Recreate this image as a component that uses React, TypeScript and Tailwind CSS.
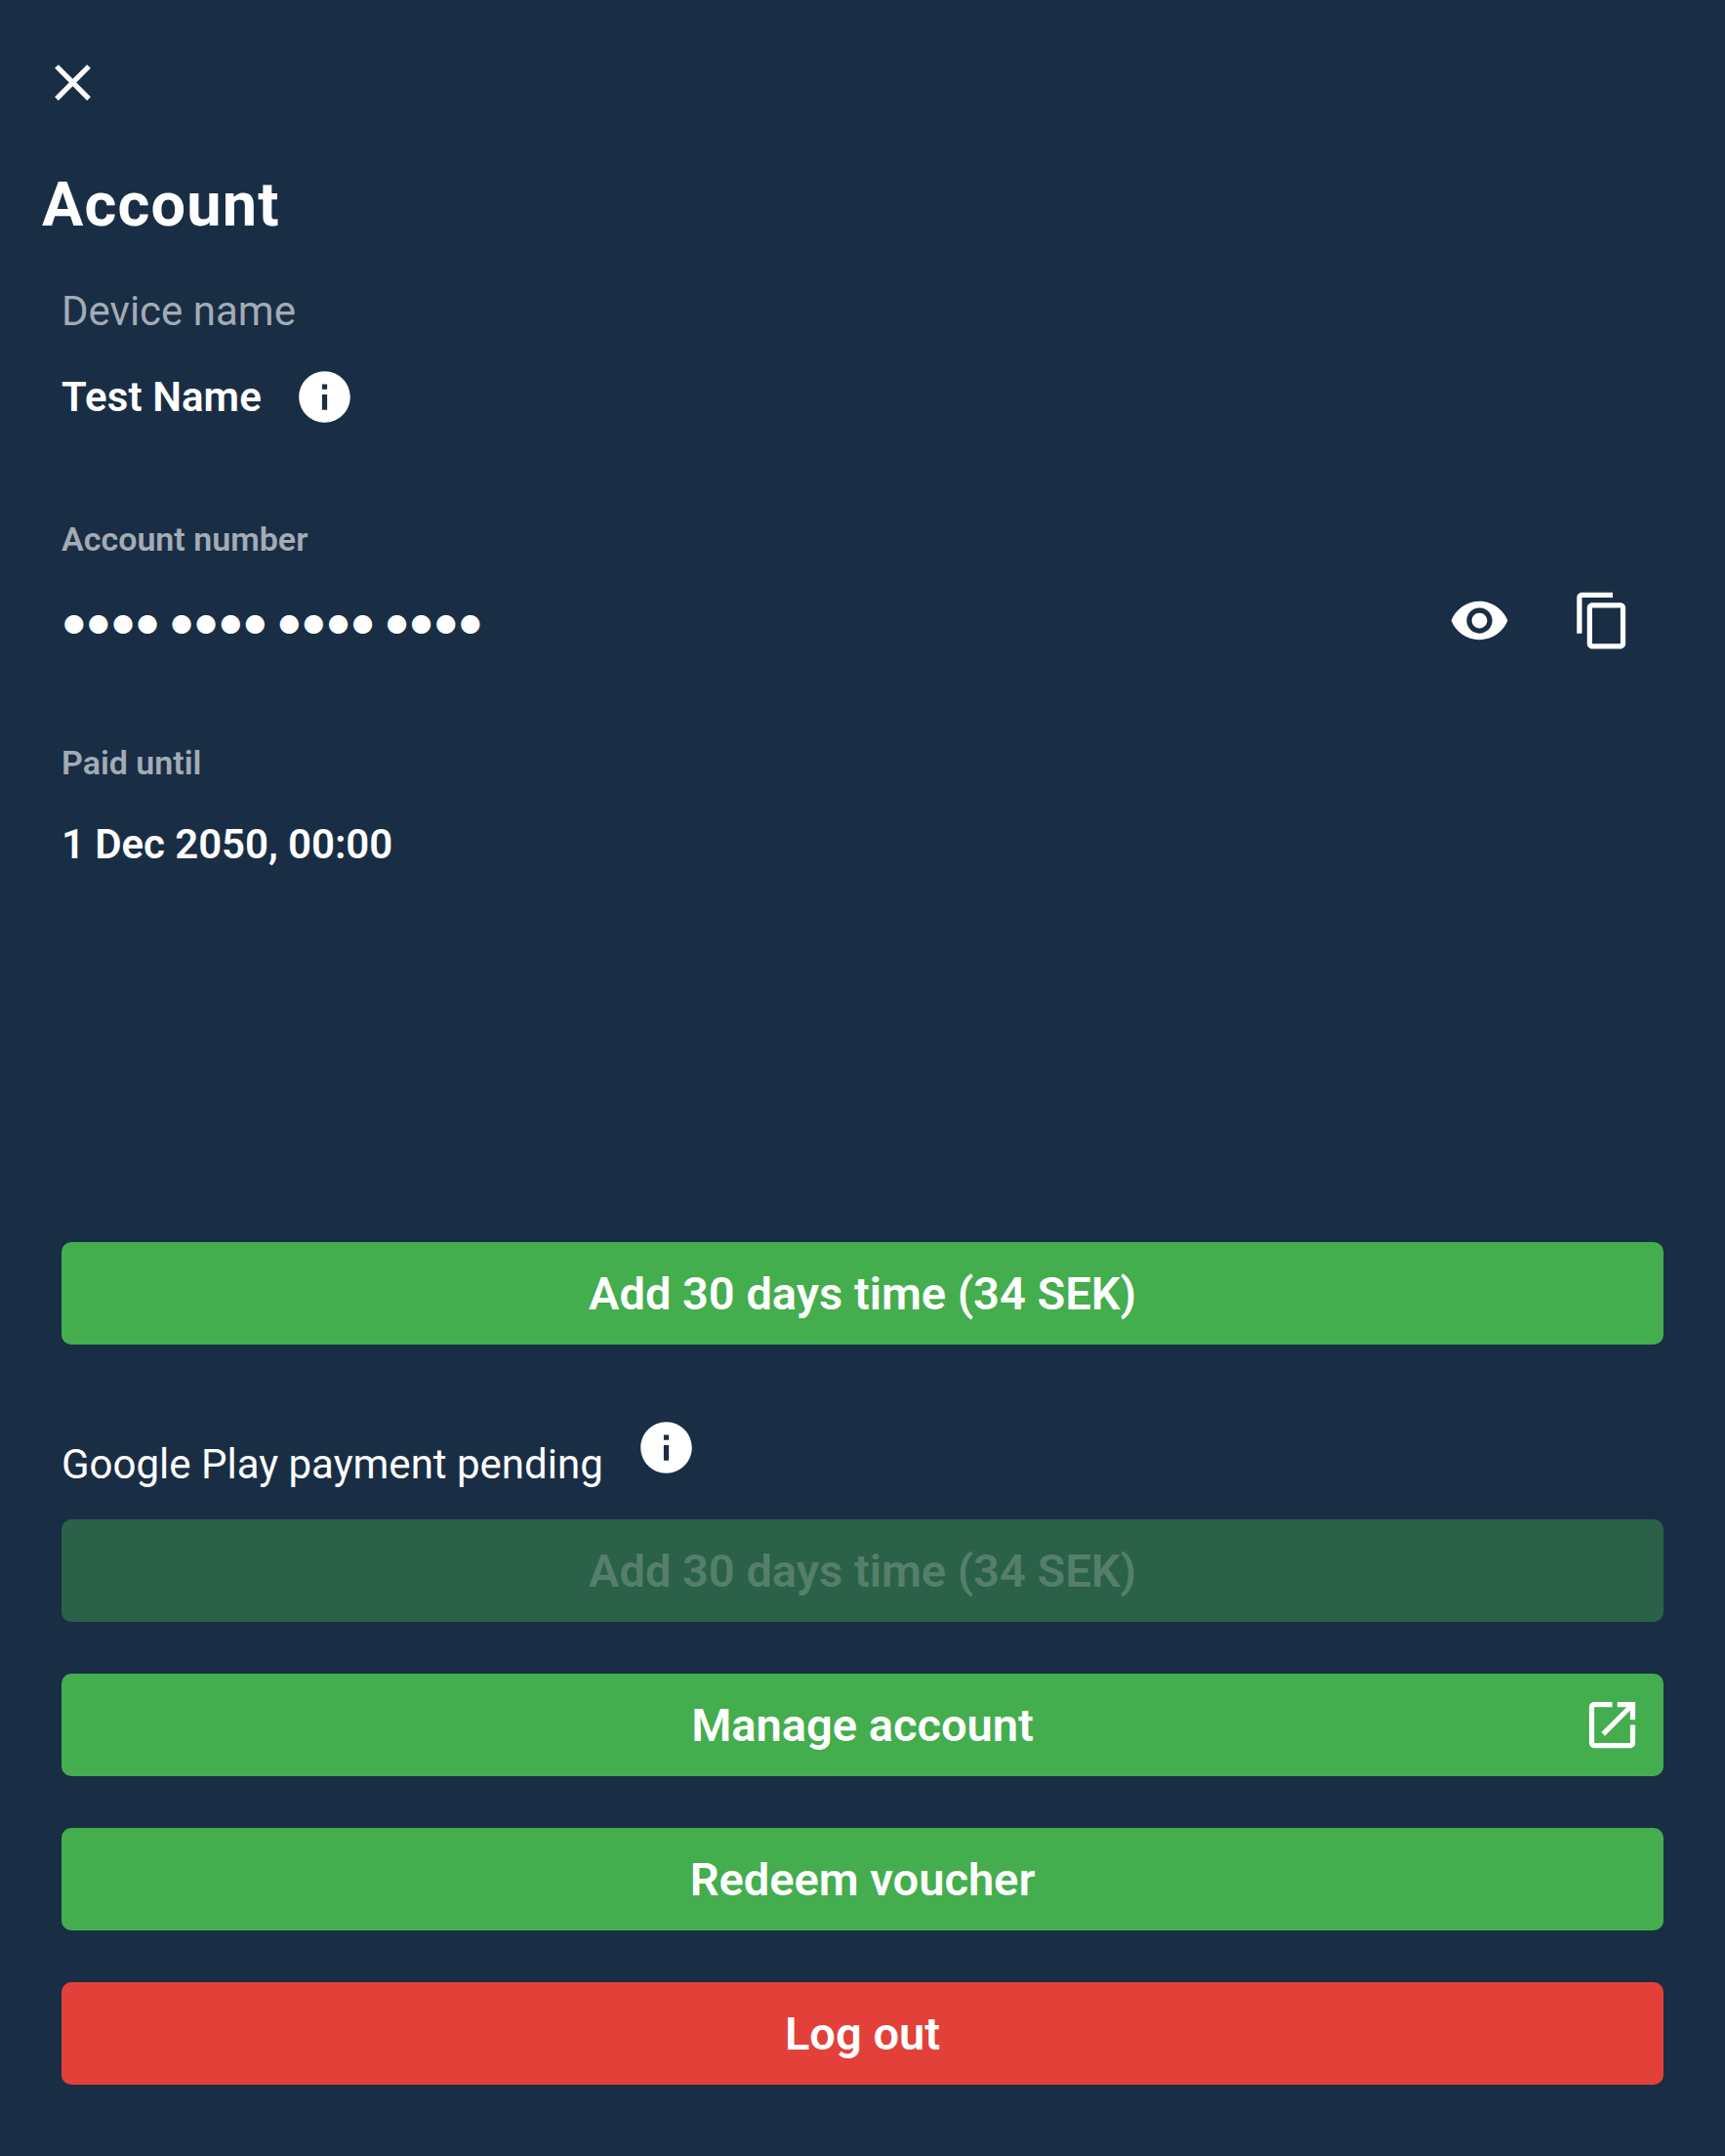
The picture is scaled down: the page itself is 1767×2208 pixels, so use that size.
const INFO = "M12 2C6.48 2 2 6.48 2 12s4.48 10 10 10 10-4.48 10-10S17.52 2 12 2zm1 15h-2v-6h2v6zm0-8h-2V7h2v2z";

function Icon({ d, className }: { d: string; className: string }) {
  return (
    <svg viewBox="0 0 24 24" fill="currentColor" className={`shrink-0 ${className}`}>
      <path d={d} />
    </svg>
  );
}

const button = "relative flex h-[105px] w-full shrink-0 items-center justify-center rounded-[10px] text-[47px] font-semibold";

export default function App() {
  return (
    <div className="flex h-[2208px] w-[1767px] flex-col bg-[#192e45] px-[63px] pt-[53px] font-['Roboto',sans-serif] leading-none text-white">
      <button className="-ml-[20px] h-[63px] w-[63px]">
        <Icon className="h-[63px] w-[63px]" d="M19 6.41 17.59 5 12 10.59 6.41 5 5 6.41 10.59 12 5 17.59 6.41 19 12 13.41 17.59 19 19 17.59 13.41 12z" />
      </button>
      <h1 className="-ml-[20px] mt-[62px] h-[63px] whitespace-nowrap text-[63px] leading-[63px] font-bold tracking-[1.2px]">Account</h1>
      <div className="mt-[57px] h-[42px] whitespace-nowrap text-[42px] leading-[42px] text-[#a3abb5]">Device name</div>
      <div className="mt-[35px] flex h-[63px] items-center gap-[33px]">
        <span className="whitespace-nowrap text-[42px] font-semibold tracking-[0.1px]">Test Name</span>
        <Icon className="h-[63px] w-[63px]" d={INFO} />
      </div>
      <div className="mt-[93px] h-[42px] whitespace-nowrap text-[34px] leading-[42px] font-semibold text-[#a3abb5]">Account number</div>
      <div className="mt-[31px] flex h-[63px] items-center">
        <span className="flex-1 whitespace-nowrap pt-[4px] pl-[2px] font-['DejaVu_Sans',sans-serif] text-[25px] tracking-[3.25px] [word-spacing:-1.2px]">●●●● ●●●● ●●●● ●●●●</span>
        <Icon className="mr-[63px] h-[63px] w-[63px]" d="M12 4.5C7 4.5 2.73 7.61 1 12c1.73 4.39 6 7.5 11 7.5s9.27-3.11 11-7.5c-1.73-4.39-6-7.5-11-7.5zM12 17c-2.76 0-5-2.24-5-5s2.24-5 5-5 5 2.24 5 5-2.24 5-5 5zm0-8c-1.66 0-3 1.34-3 3s1.34 3 3 3 3-1.34 3-3-1.34-3-3-3z" />
        <Icon className="mr-[31px] h-[63px] w-[63px]" d="M16 1H4c-1.1 0-2 .9-2 2v14h2V3h12V1zm3 4H8c-1.1 0-2 .9-2 2v14c0 1.1.9 2 2 2h11c1.1 0 2-.9 2-2V7c0-1.1-.9-2-2-2zm0 16H8V7h11v14z" />
      </div>
      <div className="mt-[93px] h-[42px] whitespace-nowrap text-[34px] leading-[42px] font-semibold text-[#a3abb5]">Paid until</div>
      <div className="mt-[42px] h-[42px] whitespace-nowrap text-[42px] leading-[42px] font-semibold tracking-[-0.08px]">1 Dec 2050, 00:00</div>
      <div className="mt-auto flex flex-col pb-[73px]">
        <button className={`${button} bg-[#44ad4d]`}>Add 30 days time (34 SEK)</button>
        <div className="mt-[63px] flex h-[116px] items-start gap-[33px]">
          <span className="mt-[39px] whitespace-nowrap text-[42px] leading-[42px]">Google Play payment pending</span>
          <Icon className="mt-[11px] h-[63px] w-[63px]" d={INFO} />
        </div>
        <button disabled className={`${button} bg-[#2a6148] text-[#557f6b]`}>Add 30 days time (34 SEK)</button>
        <button className={`${button} mt-[53px] bg-[#44ad4d]`}>
          Manage account
          <Icon className="absolute top-[21px] right-[21px] h-[63px] w-[63px]" d="M19 19H5V5h7V3H5c-1.11 0-2 .9-2 2v14c0 1.1.89 2 2 2h14c1.1 0 2-.9 2-2v-7h-2v7zM14 3v2h3.59l-9.83 9.83 1.41 1.41L19 6.41V10h2V3h-7z" />
        </button>
        <button className={`${button} mt-[53px] bg-[#44ad4d]`}>Redeem voucher</button>
        <button className={`${button} mt-[53px] bg-[#e34039]`}>Log out</button>
      </div>
    </div>
  );
}
